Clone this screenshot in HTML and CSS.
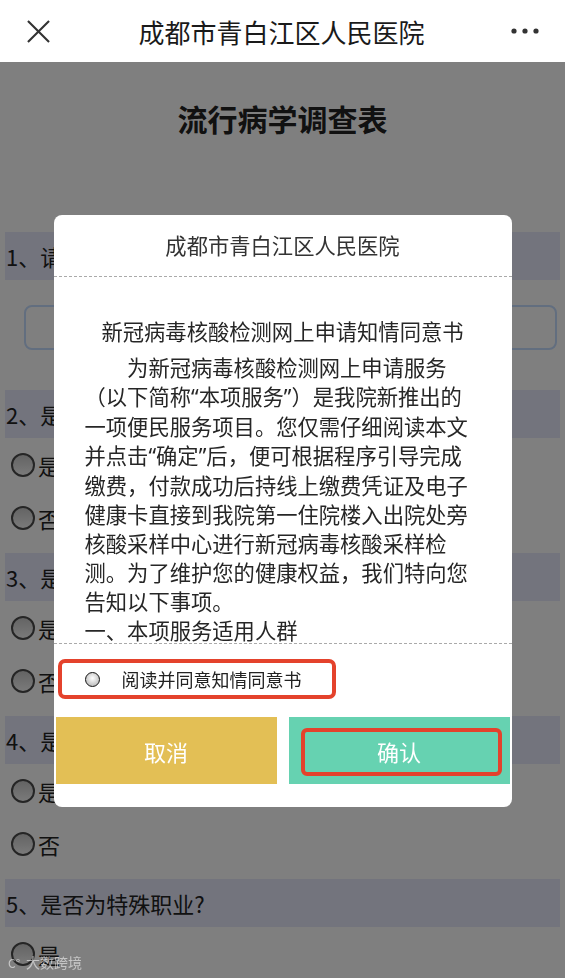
FILE: index.html
```html
<!DOCTYPE html>
<html lang="zh-CN">
<head>
    <meta charset="UTF-8">
    <meta name="viewport" content="width=device-width, initial-scale=1.0">
    <title>成都市青白江区人民医院</title>
    <link rel="stylesheet" href="styles.css">
</head>
<body>
    <div class="navbar">
        <svg class="nav-close" width="24" height="24" viewBox="0 0 24 24">
            <path d="M1 1 L23 23 M23 1 L1 23" stroke="#333" stroke-width="2.2" fill="none"/>
        </svg>
        <div class="nav-title">成都市青白江区人民医院</div>
        <svg class="nav-more" width="28" height="8" viewBox="0 0 28 8">
            <circle cx="3" cy="4" r="2.6" fill="#333"/>
            <circle cx="14" cy="4" r="2.6" fill="#333"/>
            <circle cx="25" cy="4" r="2.6" fill="#333"/>
        </svg>
    </div>

    <div class="page">
        <h1 class="page-title">流行病学调查表</h1>

        <div class="question">1、请输入您的姓名</div>
        <input class="text-input" type="text">

        <div class="question">2、是否有发热症状？</div>
        <label class="option"><span class="radio"></span>是</label>
        <label class="option"><span class="radio"></span>否</label>

        <div class="question">3、是否有咳嗽症状？</div>
        <label class="option"><span class="radio"></span>是</label>
        <label class="option"><span class="radio"></span>否</label>

        <div class="question">4、是否去过中高风险地区？</div>
        <label class="option"><span class="radio"></span>是</label>
        <label class="option"><span class="radio"></span>否</label>

        <div class="question">5、是否为特殊职业?</div>
        <label class="option"><span class="radio"></span>是</label>
        <label class="option"><span class="radio"></span>否</label>
    </div>

    <div class="mask">
        <div class="modal">
            <div class="modal-head">成都市青白江区人民医院</div>
            <div class="modal-body">
                <div class="notice-title">新冠病毒核酸检测网上申请知情同意书</div>
                <p class="notice-text">为新冠病毒核酸检测网上申请服务<br>（以下简称<span class="q">“</span>本项服务<span class="q">”</span>）是我院新推出的<br>一项便民服务项目。您仅需仔细阅读本文<br>并点击<span class="q">“</span>确定<span class="q">”</span>后，便可根据程序引导完成<br>缴费，付款成功后持线上缴费凭证及电子<br>健康卡直接到我院第一住院楼入出院处旁<br>核酸采样中心进行新冠病毒核酸采样检<br>测。为了维护您的健康权益，我们特向您<br>告知以下事项。<br>一、本项服务适用人群<br>1、有核酸检测需求的门诊患者；<br>2、需要进行核酸检测的住院陪护人员。</p>
            </div>
            <div class="agree-wrap">
                <label class="agree"><span class="agree-radio"></span>阅读并同意知情同意书</label>
            </div>
            <div class="modal-foot">
                <button class="btn btn-cancel">取消</button>
                <button class="btn btn-confirm">确认<span class="mark"></span></button>
            </div>
        </div>
    </div>

    <div class="watermark"><span class="wm-logo">C°</span>大数跨境</div>
</body>
</html>
```

FILE: styles.css
```css
body {
    margin: 0;
    font-family: "Noto Sans CJK SC", "Noto Sans", sans-serif;
    background-color: #fff;
    color: #222;
    height: 978px;
    overflow: hidden;
}
.navbar {
    height: 62px;
    background-color: #fff;
    display: flex;
    align-items: center;
    padding: 0 26px 0 27px;
    position: relative;
    z-index: 2;
}
.nav-close {
    width: 23px;
    height: 23px;
}
.nav-title {
    flex: 1;
    text-align: center;
    font-size: 26px;
    color: #1a1a1a;
    padding-left: 2px;
}
.page {
    padding: 0 5px;
}
.page-title {
    margin: 36px 0 94px;
    font-size: 30px;
    line-height: 40px;
    text-align: center;
    font-weight: bold;
}
.question {
    height: 48px;
    line-height: 48px;
    margin-top: 9px;
    background-color: #e6e8fa;
    font-size: 22px;
    padding-left: 1px;
}
.question:first-of-type {
    margin-top: 0;
}
.text-input {
    display: block;
    box-sizing: border-box;
    width: calc(100% - 22px);
    height: 45px;
    margin: 25px 3px 40px 19px;
    border: 2px solid #c4dcff;
    border-radius: 8px;
    background: #fff;
}
.option {
    height: 53px;
    display: flex;
    align-items: center;
    font-size: 22px;
    padding-left: 6px;
}
.radio {
    box-sizing: border-box;
    width: 24px;
    height: 24px;
    border-radius: 50%;
    border: 2px solid #4a4a4a;
    background: linear-gradient(to bottom, #c8c8c8, #f4f4f4);
    margin-right: 3px;
}
.mask {
    position: fixed;
    top: 62px;
    left: 0;
    right: 0;
    bottom: 0;
    background-color: rgba(0, 0, 0, 0.5);
    display: flex;
    justify-content: center;
    align-items: flex-start;
}
.modal {
    width: 458px;
    height: 592px;
    margin-top: 153px;
    background-color: #fff;
    border-radius: 8px;
    overflow: hidden;
    display: flex;
    flex-direction: column;
}
.modal-head {
    height: 62px;
    box-sizing: border-box;
    border-bottom: 1px dashed #aaa;
    display: flex;
    align-items: center;
    justify-content: center;
    font-size: 21.3px;
    color: #333;
    padding-bottom: 3px;
}
.modal-body {
    height: 367px;
    box-sizing: border-box;
    border-bottom: 1px dashed #aaa;
    overflow: hidden;
    padding: 39px 31px 0 31px;
    font-size: 21.3px;
    color: #262626;
}
.notice-title {
    line-height: 29px;
    text-align: center;
    margin-bottom: 7px;
}
.notice-text {
    margin: 0;
    line-height: 29px;
    white-space: nowrap;
    text-indent: 2em;
}
.q {
    font-family: "Noto Sans", "DejaVu Sans", sans-serif;
}
.agree-wrap {
    height: 73px;
    padding: 15px 0 0 4px;
    box-sizing: border-box;
}
.agree {
    box-sizing: border-box;
    width: 278px;
    height: 40px;
    border: 4px solid #e4422c;
    border-radius: 7px;
    display: flex;
    align-items: center;
    padding-left: 23px;
    font-size: 18px;
    color: #222;
}
.agree-radio {
    box-sizing: border-box;
    width: 15px;
    height: 15px;
    border-radius: 50%;
    border: 1.5px solid #111;
    background: radial-gradient(circle at 50% 40%, #fff, #aaa);
    margin-right: 22px;
}
.modal-foot {
    display: flex;
    gap: 12px;
    padding: 0 2px;
    height: 67px;
}
.btn {
    flex: 1;
    border: none;
    color: #fff;
    font-family: inherit;
    font-size: 22px;
    position: relative;
    padding: 0;
}
.btn-cancel {
    background-color: #e3bf55;
}
.btn-confirm {
    background-color: #66d2b1;
}
.mark {
    position: absolute;
    left: 12px;
    top: 11px;
    width: 201px;
    height: 48px;
    box-sizing: border-box;
    border: 4px solid #e4422c;
    border-radius: 6px;
}
.watermark {
    position: fixed;
    left: 8px;
    bottom: 6px;
    font-size: 14px;
    color: rgba(255, 255, 255, 0.55);
    display: flex;
    align-items: center;
}
.wm-logo {
    font-size: 12px;
    margin-right: 6px;
}
```
